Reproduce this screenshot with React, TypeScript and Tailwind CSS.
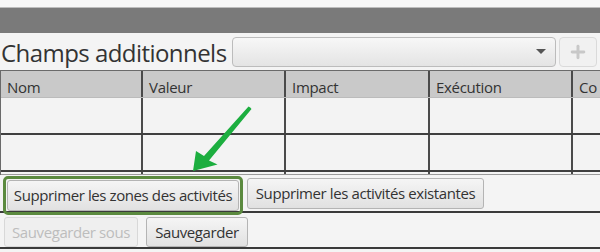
import { Plus } from "lucide-react"

const columns = ["Nom", "Valeur", "Impact", "Exécution", "Co"]

function Cell({ last, children }: { last?: boolean; children?: React.ReactNode }) {
  return (
    <div className={`h-full overflow-hidden ${last ? "" : "border-r-2 border-[#4a4a4a]"}`}>{children}</div>
  )
}

export default function App() {
  return (
    <div
      className="relative w-[600px] h-[252px] overflow-hidden bg-[#f4f4f4] text-[#333]"
      style={{ fontFamily: '"Open Sans", "Noto Sans", sans-serif' }}
    >
      {/* window chrome */}
      <div className="h-[8px] border-b border-[#bdbdbd] bg-[#f7f7f7]" />
      <div className="h-[25px] bg-[#7a7a7a]" />

      {/* title row */}
      <div className="flex items-center h-[37px] pl-[1px] pr-[3px]">
        <span className="w-[230px] pt-[2px] text-[24px] leading-none tracking-[-0.55px] text-[#333] whitespace-nowrap">
          Champs additionnels
        </span>
        <div className="ml-[1px] flex-1 h-[30px] rounded-[4px] border border-[#bcbcbc] bg-gradient-to-b from-[#f7f7f7] to-[#e4e4e4] flex items-center justify-end pr-[9px]">
          <div className="w-0 h-0 border-l-[5px] border-r-[5px] border-t-[5px] border-l-transparent border-r-transparent border-t-[#555]" />
        </div>
        <div className="ml-[3px] w-[38px] h-[30px] rounded-[4px] border border-[#dadada] bg-[#f1f1f1] flex items-center justify-center">
          <Plus size={20} strokeWidth={3.5} className="text-[#c8c8c8]" />
        </div>
      </div>

      {/* table */}
      <div className="border-t border-[#6a6a6a] border-l border-l-[#6a6a6a]">
        <div className="grid grid-cols-[142px_143px_144px_143px_1fr] h-[27px] bg-[#c9c9c9] border-b border-[#bbb]">
          {columns.map((c, i) => (
            <div
              key={c}
              className={`overflow-hidden pl-[6px] pt-[7px] text-[15px] leading-[19px] tracking-[-0.3px] whitespace-nowrap text-[#333] ${
                i < columns.length - 1 ? "border-r-2 border-[#4a4a4a]" : ""
              }`}
            >
              {c}
            </div>
          ))}
        </div>
        {[0, 1].map((r) => (
          <div
            key={r}
            className="grid grid-cols-[142px_143px_144px_143px_1fr] h-[37px] border-b-2 border-[#3f3f3f] bg-[#f3f3f3]"
          >
            {columns.map((c, i) => (
              <Cell key={c} last={i === columns.length - 1} />
            ))}
          </div>
        ))}
        <div className="grid grid-cols-[142px_143px_144px_143px_1fr] h-[3px] border-b border-[#9a9a9a]">
          {columns.map((c, i) => (
            <Cell key={c} last={i === columns.length - 1} />
          ))}
        </div>
      </div>

      {/* action buttons */}
      <div className="flex items-center h-[38px] border-b-2 border-[#3a3a3a] pl-[3px]">
        <div className="relative z-10 mt-[4px] rounded-[5px] border-[3px] border-[#5b8a3f] p-[1px]">
          <button className="h-[31px] w-[232px] rounded-[3px] border border-[#b4b4b4] bg-gradient-to-b from-[#f5f5f5] to-[#e1e1e1] text-[15px] tracking-[-0.4px] text-[#333] whitespace-nowrap">
            Supprimer les zones des activités
          </button>
        </div>
        <button className="ml-[4px] h-[31px] w-[237px] rounded-[3px] border border-[#b4b4b4] bg-gradient-to-b from-[#f5f5f5] to-[#e1e1e1] text-[15px] tracking-[-0.4px] text-[#333] whitespace-nowrap">
          Supprimer les activités existantes
        </button>
      </div>

      <div className="flex items-start gap-[8px] h-[36px] border-b-2 border-[#3a3a3a] pl-[4px] pt-[4px]">
        <button className="h-[30px] w-[134px] rounded-[3px] border border-[#d8d8d8] bg-[#efefef] text-[15px] tracking-[-0.4px] text-[#bdbdbd] whitespace-nowrap">
          Sauvegarder sous
        </button>
        <button className="h-[30px] w-[102px] rounded-[3px] border border-[#b4b4b4] bg-gradient-to-b from-[#f5f5f5] to-[#e1e1e1] text-[15px] tracking-[-0.4px] text-[#333] whitespace-nowrap">
          Sauvegarder
        </button>
      </div>

      {/* annotation arrow */}
      <svg className="absolute left-0 top-0 pointer-events-none" width="600" height="252">
        <path
          d="M248.5 106.5 Q250.5 107 251.5 109 L209 160.5 L217.5 164.5 L193 171 L196 151 L204 156 Z"
          fill="#1cae3f"
        />
      </svg>
    </div>
  )
}
